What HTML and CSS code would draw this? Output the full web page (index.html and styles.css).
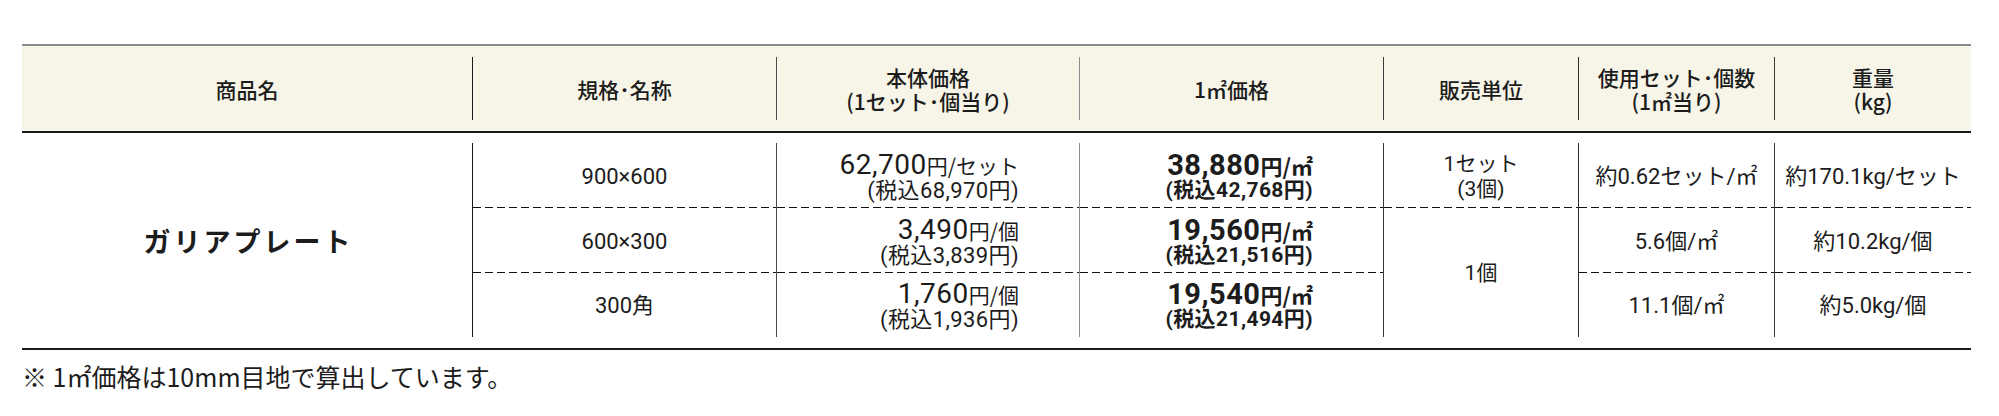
FILE: index.html
```html
<!DOCTYPE html>
<html lang="ja">
<head>
<meta charset="utf-8">
<title>ガリアプレート 価格表</title>
<link rel="stylesheet" href="styles.css">
</head>
<body>
<div class="spec">
  <div class="thead">
    <div class="th">商品名</div>
    <div class="th s2">規格･名称</div>
    <div class="th s3"><span class="ln">本体価格</span><span class="ln">(1セット･個当り)</span></div>
    <div class="th s4">1㎡価格</div>
    <div class="th s5">販売単位</div>
    <div class="th s6"><span class="ln">使用セット･個数</span><span class="ln">(1㎡当り)</span></div>
    <div class="th s7"><span class="ln">重量</span><span class="ln">(kg)</span></div>
  </div>
  <div class="tbody">
    <div class="name">ガリアプレート</div>

    <div class="td s2 dash r1">900×600</div>
    <div class="td s3 dash r1 price"><span class="main">62,700<small>円/セット</small></span><span class="tax">(税込68,970円)</span></div>
    <div class="td s4 dash r1 price bold"><span class="main">38,880<small>円/㎡</small></span><span class="tax">(税込42,768円)</span></div>
    <div class="td s5 dash r1 unit"><span>1セット</span><span>(3個)</span></div>
    <div class="td s6 dash r1">約0.62セット/㎡</div>
    <div class="td s7 dash r1">約170.1kg/セット</div>

    <div class="td s2 dash r2">600×300</div>
    <div class="td s3 dash r2 price"><span class="main">3,490<small>円/個</small></span><span class="tax">(税込3,839円)</span></div>
    <div class="td s4 dash r2 price bold"><span class="main">19,560<small>円/㎡</small></span><span class="tax">(税込21,516円)</span></div>
    <div class="td s5 r23 unit">1個</div>
    <div class="td s6 dash r2">5.6個/㎡</div>
    <div class="td s7 dash r2">約10.2kg/個</div>

    <div class="td s2 r3">300角</div>
    <div class="td s3 r3 price"><span class="main">1,760<small>円/個</small></span><span class="tax">(税込1,936円)</span></div>
    <div class="td s4 r3 price bold"><span class="main">19,540<small>円/㎡</small></span><span class="tax">(税込21,494円)</span></div>
    <div class="td s6 r3">11.1個/㎡</div>
    <div class="td s7 r3">約5.0kg/個</div>
  </div>
</div>
<p class="note">※ 1㎡価格は10mm目地で算出しています。</p>
</body>
</html>
```

FILE: styles.css
```css
* { box-sizing: border-box; }

html, body {
  margin: 0;
  padding: 0;
  background: #ffffff;
}

body {
  padding: 44px 0 0 22px;
  color: #1c1c1c;
  font-family: "Noto Sans CJK JP", "Noto Sans", sans-serif;
}

.spec {
  width: 1949px;
}

.thead,
.tbody {
  display: grid;
  grid-template-columns: 450px 304px 303px 304px 195px 196px 197px;
}

.thead {
  background: #f7f5e8;
  border-top: 2px solid #8a8a8a;
  border-bottom: 2px solid #1a1a1a;
  padding: 11px 0;
}

.th {
  height: 63px;
  display: flex;
  flex-direction: column;
  align-items: center;
  justify-content: center;
  text-align: center;
  font-size: 21px;
  line-height: 24px;
  font-weight: 500;
  padding-top: 1px;
}

.th .ln {
  display: block;
  height: 24px;
}

.s2 { border-left: 1px solid #1a1a1a; }
.s3 { border-left: 1px solid #4a4a4a; }
.s4 { border-left: 1px solid #8c8c8c; }
.s5 { border-left: 1px solid #3a3a3a; }
.s6 { border-left: 1px solid #2a2a2a; }
.s7 { border-left: 1px solid #3a3a3a; }

.tbody {
  grid-template-rows: 65px 65px 64px;
  padding: 10px 0 11px;
  border-bottom: 2px solid #1a1a1a;
  font-family: "Roboto", "Noto Sans CJK JP", sans-serif;
}

.name {
  grid-column: 1;
  grid-row: 1 / 4;
  display: flex;
  align-items: center;
  justify-content: center;
  font-family: "Noto Sans CJK JP", sans-serif;
  font-size: 27px;
  font-weight: 700;
  letter-spacing: 3px;
  padding-left: 3px;
}

.td {
  display: flex;
  flex-direction: column;
  align-items: center;
  justify-content: center;
  text-align: center;
  font-size: 22px;
  line-height: 26px;
  padding-top: 2px;
}

.s2 { grid-column: 2; }
.s3 { grid-column: 3; }
.s4 { grid-column: 4; }
.s5 { grid-column: 5; }
.s6 { grid-column: 6; }
.s7 { grid-column: 7; }

.r1 { grid-row: 1; }
.r2 { grid-row: 2; }
.r3 { grid-row: 3; }
.r23 { grid-row: 2 / 4; }

.dash {
  background-image: repeating-linear-gradient(to right, #111111 0 8px, transparent 8px 12px);
  background-size: 100% 1px;
  background-position: left bottom;
  background-repeat: no-repeat;
}

.price {
  align-items: flex-end;
  padding-right: 60px;
  padding-top: 1px;
  text-align: right;
}

.s4.price { padding-right: 70px; }

.price .main {
  font-size: 28px;
  line-height: 28px;
  letter-spacing: 0.5px;
}

.s4 .main { font-size: 29px; }

.price .main small {
  font-family: "Noto Sans CJK JP", sans-serif;
  font-size: 21px;
  letter-spacing: 0;
}

.s4 .main small { font-size: 22px; }

.price .tax {
  font-size: 22px;
  line-height: 23px;
  letter-spacing: 0.4px;
}

.s4 .tax { font-size: 21px; }

.bold { font-weight: 700; }
.bold small { font-weight: 700; }

.unit {
  font-size: 21px;
  line-height: 25px;
}

.note {
  margin: 12px 0 0;
  font-size: 25px;
  line-height: 28px;
  color: #1c1c1c;
}
```
